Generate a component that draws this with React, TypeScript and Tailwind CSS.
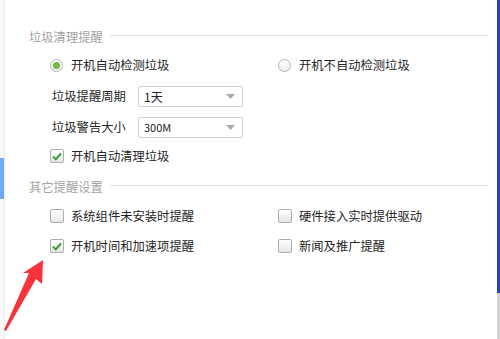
import React from "react";

const font = { fontFamily: '"Noto Sans CJK SC", "Noto Sans", sans-serif' };

function Heading({ text }: { text: string }) {
  return (
    <div className="flex h-4 items-center">
      <span className="text-[12.3px] leading-4 text-[#a3a3a3]">{text}</span>
      <div className="mb-[4px] ml-[7px] h-px flex-1 bg-[#e3e3e3]" />
    </div>
  );
}

function Radio({ checked, label }: { checked?: boolean; label: string }) {
  return (
    <div className="flex h-5 items-center gap-[8px]">
      <span className="flex h-[13px] w-[13px] items-center justify-center rounded-full border border-[#b4b4b4] bg-gradient-to-b from-white to-[#eeeeee]">
        {checked && <span className="h-[7px] w-[7px] rounded-full bg-[#74b843]" />}
      </span>
      <span className="text-[12.3px] text-[#262626]">{label}</span>
    </div>
  );
}

function Check({ checked, label }: { checked?: boolean; label: string }) {
  return (
    <div className="flex h-5 items-center gap-[7px]">
      <span className="flex h-[14px] w-[14px] items-center justify-center rounded-[2px] border border-[#adadad] bg-gradient-to-b from-white to-[#e6e6e6]">
        {checked && (
          <svg width="10" height="9" viewBox="0 0 10 9">
            <path d="M1 4.6 L3.8 7.4 L9 1.4" fill="none" stroke="#2f9c31" strokeWidth="2" />
          </svg>
        )}
      </span>
      <span className="text-[12.3px] text-[#262626]">{label}</span>
    </div>
  );
}

function Select({ value, small }: { value: string; small?: boolean }) {
  return (
    <div className="flex h-[21px] w-[105px] items-center justify-between rounded-[2px] border border-[#d2d2d2] bg-white pl-[5px] pr-[7px]">
      <span className={small ? "text-[11px] text-[#222]" : "text-[12px] text-[#222]"}>{value}</span>
      <svg width="9" height="5" viewBox="0 0 9 5">
        <path d="M0 0 H9 L4.5 5 Z" fill="#a9a9a9" />
      </svg>
    </div>
  );
}

export default function App() {
  return (
    <div className="relative flex h-[339px] w-[500px] overflow-hidden bg-white" style={font}>
      <div className="flex w-[4px] flex-col bg-[#f8f8f8]">
        <div className="h-[158px]" />
        <div className="h-[41px] bg-[#72a9f7]" />
      </div>
      <div className="w-px bg-[#ebebeb]" />
      <div className="flex flex-1 flex-col pl-[24px] pr-[9px] pt-[29px]">
        <Heading text="垃圾清理提醒" />
        <div className="mt-[10px] grid grid-cols-[228px_1fr] pl-[21px]">
          <Radio checked label="开机自动检测垃圾" />
          <Radio label="开机不自动检测垃圾" />
        </div>
        <div className="mt-[11px] flex items-center pl-[23px]">
          <span className="w-[86px] text-[12.3px] text-[#262626]">垃圾提醒周期</span>
          <Select value="1天" />
        </div>
        <div className="mt-[10px] flex items-center pl-[23px]">
          <span className="w-[86px] text-[12.3px] text-[#262626]">垃圾警告大小</span>
          <Select value="300M" small />
        </div>
        <div className="mt-[8px] pl-[21px]">
          <Check checked label="开机自动清理垃圾" />
        </div>
        <div className="mt-[13px]">
          <Heading text="其它提醒设置" />
        </div>
        <div className="mt-[11px] grid grid-cols-[228px_1fr] gap-y-[10px] pl-[21px]">
          <Check label="系统组件未安装时提醒" />
          <Check label="硬件接入实时提供驱动" />
          <Check checked label="开机时间和加速项提醒" />
          <Check label="新闻及推广提醒" />
        </div>
      </div>
      <div className="flex w-[3px] flex-col">
        <div className="h-[293px] bg-[#2842c2]" />
        <div className="flex-1 bg-[#d3d3d3]" />
      </div>
      <svg className="absolute left-0 top-0" width="60" height="339" viewBox="0 0 60 339">
        <polygon points="43,260 42,284 36,279 6,331 4,330 29,273 23,273" fill="#f8333c" />
      </svg>
    </div>
  );
}
